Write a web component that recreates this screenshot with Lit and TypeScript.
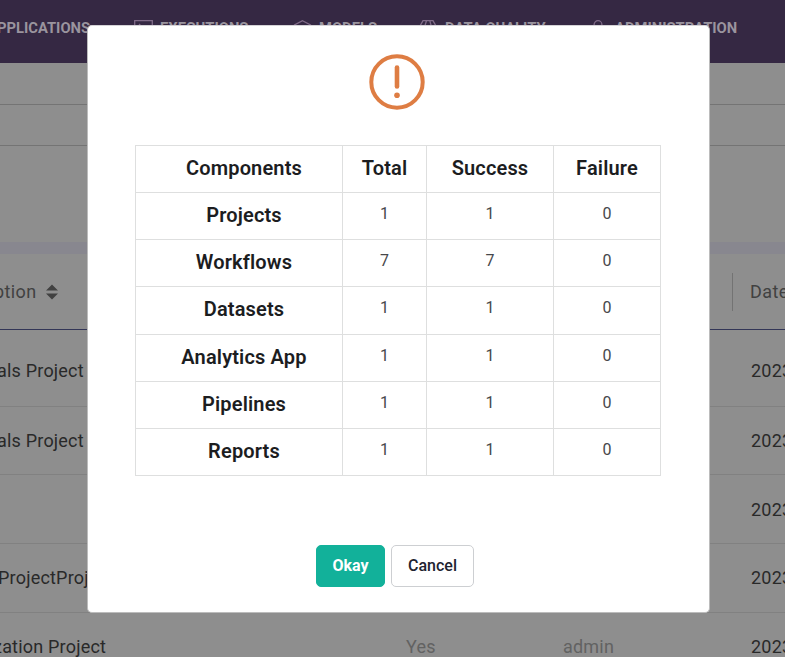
import { LitElement, html, css, svg } from "lit";
import { customElement } from "lit/decorators.js";

const results = [
  ["Projects", 1, 1, 0],
  ["Workflows", 7, 7, 0],
  ["Datasets", 1, 1, 0],
  ["Analytics App", 1, 1, 0],
  ["Pipelines", 1, 1, 0],
  ["Reports", 1, 1, 0],
];

const projects = [
  { description: "als Project", kind: "lead", shared: "", owner: "" },
  { description: "als Project", kind: "short", shared: "", owner: "" },
  { description: "", kind: "", shared: "", owner: "" },
  { description: "ProjectProj", kind: "raised", shared: "", owner: "" },
  { description: "zation Project", kind: "raised long", shared: "Yes", owner: "admin" },
];

const icons = {
  executions: svg`<path d="M.7 .7H18.3V14H.7ZM5 4l3 3-3 3M9 10h4"/>`,
  models: svg`<path d="M9.5 .7L17.5 5V14L9.5 18L1.5 14V5ZM1.5 5L9.5 9L17.5 5M9.5 9V18"/>`,
  quality: svg`<path d="M4 .7H14L17.500 7L9 17L.500 7ZM.500 7H17.500M7.500 .7L5.500 7L9 17L12.500 7L10.800 .7"/>`,
  admin: svg`<circle cx="9" cy="4.600" r="3.900"/><path d="M2 18v-3a4 4 0 0 1 4-4h7a4 4 0 0 1 4 4v3"/>`,
};

@customElement("app-root")
export class AppRoot extends LitElement {
  static styles = css`
    :host {
      display: block;
      position: relative;
      width: 785px;
      height: 657px;
      overflow: hidden;
      background: #8e8e8e;
      font-family: Roboto, sans-serif;
    }
    * { box-sizing: border-box; }
    .page { height: 657px; overflow: hidden; }
    .nav {
      display: grid;
      grid-template-columns: 134px 159px 126px 170px 1fr;
      height: 63px;
      padding-top: 18px;
      background: #352843;
      color: #9a949e;
      font-size: 14.75px;
      font-weight: 700;
      line-height: 21px;
      white-space: nowrap;
    }
    .item { display: flex; }
    .item.first { margin-left: -3px; }
    .item svg {
      width: 19px;
      height: 20px;
      margin: 2px 7px 0 0;
      flex: none;
      fill: none;
      stroke: #806b88;
      stroke-width: 1.3;
    }
    .filters { height: 179px; padding-top: 41px; }
    .field { height: 42px; border: solid #747474; border-width: 1px 0; }
    .band { height: 12px; background: #88878f; }
    .row {
      display: grid;
      grid-template-columns: 406px 157px 188px 1fr;
      align-items: center;
      height: 69px;
      border-bottom: 1px solid #818181;
      font-size: 18px;
      letter-spacing: 0.2px;
      color: #292929;
      white-space: nowrap;
    }
    .description { margin-left: -3px; }
    .lead { height: 77px; padding-top: 5px; }
    .short { height: 68px; }
    .raised { padding-bottom: 2px; }
    .raised .description { margin-left: -2px; }
    .long .description { margin-left: -7px; }
    .row.head {
      grid-template-columns: 732px 1fr;
      height: 76px;
      border-bottom-color: #333657;
      color: #414141;
      letter-spacing: 0.4px;
    }
    .muted { color: #626262; }
    .sort { display: flex; align-items: center; gap: 9px; margin-left: -6px; }
    .sort svg { width: 12px; height: 16px; fill: #414141; }
    .divided {
      display: flex;
      align-items: center;
      height: 38px;
      padding-left: 17px;
      border-left: 1px solid #737373;
    }
    .modal {
      position: absolute;
      left: 87px;
      top: 25px;
      width: 623px;
      height: 588px;
      display: flex;
      flex-direction: column;
      align-items: center;
      padding: 28px 0 0;
      background: #fff;
      border: 1px solid #bcbcbc;
      border-top-color: #d5d3d7;
      border-radius: 5px;
    }
    .alert { width: 56px; height: 56px; margin-right: 3px; }
    .table {
      display: grid;
      grid-template-columns: 207px 84px 127px 107px;
      grid-template-rows: repeat(7, 47.14px);
      width: 526px;
      margin: 35px 1px 0 0;
      border: solid #dedfdf;
      border-width: 0 1px 1px 0;
    }
    .cell {
      border: solid #dedfdf;
      border-width: 1px 0 0 1px;
      text-align: center;
      font-size: 16px;
      line-height: 41px;
      color: #47484b;
    }
    .name {
      font-size: 20px;
      line-height: 45px;
      font-weight: 600;
      letter-spacing: 0.15px;
      color: #1c1d1f;
    }
    .label { padding-left: 10px; }
    .actions { display: flex; gap: 6px; margin: 69px 7px 0 0; }
    .btn {
      height: 42px;
      width: 83px;
      padding: 0;
      border: 1px solid #cdcfd2;
      border-radius: 5px;
      background: #fff;
      color: #212330;
      font: 500 16px/40px Roboto, sans-serif;
      text-align: center;
    }
    .btn.primary {
      width: 69px;
      background: #12b19a;
      border-color: #12b19a;
      color: #fff;
      font-weight: 700;
    }
  `;

  private icon(name: keyof typeof icons) {
    return html`<svg viewBox="0 0 19 20">${icons[name]}</svg>`;
  }

  render() {
    return html`
      <div class="page">
        <nav class="nav">
          <span class="item first">PPLICATIONS</span>
          <span class="item">${this.icon("executions")}EXECUTIONS</span>
          <span class="item">${this.icon("models")}MODELS</span>
          <span class="item">${this.icon("quality")}DATA QUALITY</span>
          <span class="item">${this.icon("admin")}ADMINISTRATION</span>
        </nav>
        <div class="filters"><div class="field"></div></div>
        <div class="band"></div>
        <div class="row head">
          <span class="sort">ption
            <svg viewBox="0 0 12 16"><path d="M0 6.500L6 .5l6 6zM0 9.500h12l-6 6z"/></svg>
          </span>
          <span class="divided">Date</span>
        </div>
        ${projects.map(
          (p) => html`<div class="row ${p.kind}">
            <span class="description">${p.description}</span>
            <span class="muted">${p.shared}</span>
            <span class="muted">${p.owner}</span>
            <span>2023</span>
          </div>`
        )}
      </div>
      <section class="modal" role="dialog">
        <svg class="alert" viewBox="0 0 56 56" fill="none" stroke="#de7d43" stroke-linecap="round">
          <circle cx="28" cy="28" r="25.700" stroke-width="4"/>
          <path d="M28 13.500V32.500" stroke-width="4.600"/>
          <circle cx="28" cy="41.300" r="2.800" fill="#de7d43" stroke="none"/>
        </svg>
        <div class="table">
          ${["Components", "Total", "Success", "Failure"].map(
            (t, i) => html`<div class="cell name ${i === 0 ? "label" : ""}">${t}</div>`
          )}
          ${results.map((r) =>
            r.map((v, i) => html`<div class="cell ${i === 0 ? "name label" : ""}">${v}</div>`)
          )}
        </div>
        <div class="actions">
          <button class="btn primary">Okay</button>
          <button class="btn">Cancel</button>
        </div>
      </section>
    `;
  }
}
